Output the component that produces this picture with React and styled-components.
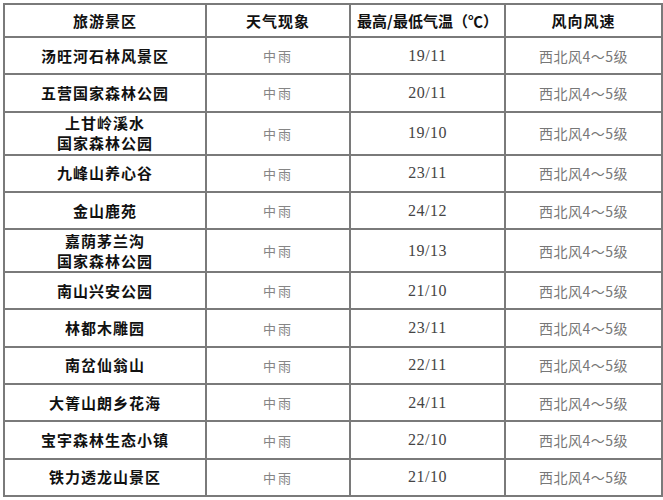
import React from 'react'
import styled, { createGlobalStyle } from 'styled-components'

const GlobalStyle = createGlobalStyle`
  html, body {
    margin: 0;
    padding: 0;
    background: #fff;
  }
  body {
    font-family: "Noto Sans CJK SC", "Noto Sans", sans-serif;
  }
`

const rows = [
  { name: ['汤旺河石林风景区'], temp: '19/11' },
  { name: ['五营国家森林公园'], temp: '20/11' },
  { name: ['上甘岭溪水', '国家森林公园'], temp: '19/10' },
  { name: ['九峰山养心谷'], temp: '23/11' },
  { name: ['金山鹿苑'], temp: '24/12' },
  { name: ['嘉荫茅兰沟', '国家森林公园'], temp: '19/13' },
  { name: ['南山兴安公园'], temp: '21/10' },
  { name: ['林都木雕园'], temp: '23/11' },
  { name: ['南岔仙翁山'], temp: '22/11' },
  { name: ['大箐山朗乡花海'], temp: '24/11' },
  { name: ['宝宇森林生态小镇'], temp: '22/10' },
  { name: ['铁力透龙山景区'], temp: '21/10' },
]

function App() {
  return (
    <>
      <GlobalStyle />
      <Page>
        <Table>
          <colgroup>
            <col style={{ width: 202 }} />
            <col style={{ width: 144 }} />
            <col style={{ width: 155 }} />
            <col style={{ width: 157 }} />
          </colgroup>
          <thead>
            <tr>
              <Head>旅游景区</Head>
              <Head>天气现象</Head>
              <Head $tight>最高/最低气温（℃）</Head>
              <Head>风向风速</Head>
            </tr>
          </thead>
          <tbody>
            {rows.map((r, i) => (
              <Row key={i} $tall={r.name.length > 1}>
                <Name>
                  {r.name.map((line, j) => (
                    <div key={j}>{line}</div>
                  ))}
                </Name>
                <Weather>中雨</Weather>
                <Temp>{r.temp}</Temp>
                <Wind>西北风4～5级</Wind>
              </Row>
            ))}
          </tbody>
        </Table>
      </Page>
    </>
  )
}

const Page = styled.div`
  padding: 3px 0 0 3px;
`

const Table = styled.table`
  border-collapse: collapse;
  table-layout: fixed;
  width: 658px;
  td, th {
    border: 2px solid #7a7a7a;
    text-align: center;
    vertical-align: middle;
    padding: 0;
  }
`

const Head = styled.th`
  height: 31px;
  font-size: 15px;
  font-weight: 700;
  color: #111;
  letter-spacing: ${p => (p.$tight ? '0' : '1px')};
`

const Row = styled.tr`
  td {
    height: ${p => (p.$tall ? '41px' : '35.3px')};
  }
`

const Name = styled.td`
  font-size: 15px;
  font-weight: 700;
  color: #111;
  letter-spacing: 1px;
  line-height: 20px;
`

const Weather = styled.td`
  font-size: 13px;
  color: #858585;
  letter-spacing: 2px;
`

const Temp = styled.td`
  font-family: "Liberation Serif", "Noto Sans CJK SC", serif;
  font-size: 16px;
  color: #444;
  letter-spacing: 0.5px;
`

const Wind = styled.td`
  font-size: 14px;
  color: #777;
  letter-spacing: 0.5px;
`

export default App
